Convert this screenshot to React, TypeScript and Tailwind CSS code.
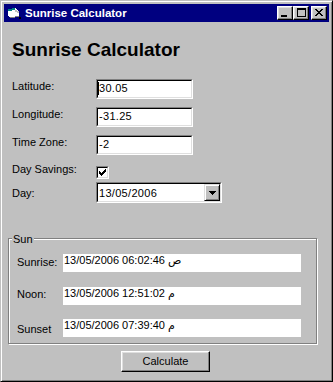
import React from 'react';

// Win95 style building blocks
function CaptionButton({ children, className = '' }: { children: React.ReactNode; className?: string }) {
  return (
    <div className={`w-[16px] h-[14px] bg-[#c0c0c0] border border-t-white border-l-white border-r-black border-b-black shadow-[inset_-1px_-1px_0_#808080,inset_1px_1px_0_#dfdfdf] ${className}`}>
      {children}
    </div>
  );
}

function Sunken({ className = '', children }: { className?: string; children?: React.ReactNode }) {
  return (
    <div className={`border border-t-[#808080] border-l-[#808080] border-r-white border-b-white ${className}`}>
      <div className="h-full w-full border border-t-black border-l-black border-r-[#dfdfdf] border-b-[#dfdfdf] bg-white relative">
        {children}
      </div>
    </div>
  );
}

function TextField({ value, caret }: { value: string; caret?: boolean }) {
  return (
    <Sunken className="w-[97px] h-[20px]">
      <div className="pl-[1px] pt-[1px] whitespace-nowrap tracking-[0.3px]">{value}</div>
      {caret && <span className="absolute left-0 top-[1px] w-[1px] h-[13px] bg-black" />}
    </Sunken>
  );
}

const CHECK = ['......x', '.....xx', 'x...xxx', 'xx.xxx.', 'xxxxx..', '.xxx...', '..x....'];
const CLOSE = ['xx....xx', '.xx..xx.', '..xxxx..', '...xx...', '..xxxx..', '.xx..xx.', 'xx....xx'];

function Pixels({ rows, x, y }: { rows: string[]; x: number; y: number }) {
  return (
    <>
      {rows.map((r, j) =>
        r.split('').map((c, i) => (c === 'x' ? <rect key={`${i}-${j}`} x={x + i} y={y + j} width={1} height={1} fill="#000" /> : null))
      )}
    </>
  );
}

function TimeRow({ label, value, padTop, className }: { label: string; value: string; padTop: string; className: string }) {
  return (
    <div className={`flex ${className}`}>
      <div className={`w-[46px] ${padTop}`}>{label}</div>
      <div className="w-[238px] h-[18px] bg-white pl-[1px] whitespace-nowrap tracking-[0.3px]">{value}</div>
    </div>
  );
}

export default function App() {
  return (
    <div className="w-[333px] h-[382px] bg-[#c0c0c0] border border-t-[#c0c0c0] border-l-[#c0c0c0] border-r-black border-b-black shadow-[inset_1px_1px_0_#fff,inset_-1px_-1px_0_#808080] p-[3px] flex flex-col text-[11px] leading-[13px] text-black font-['Liberation_Sans','DejaVu_Sans',sans-serif]">
      {/* Title bar */}
      <div className="h-[18px] bg-[#000080] flex items-center px-[2px]">
        <svg width="16" height="16" viewBox="0 0 16 16" shapeRendering="crispEdges">
          <path d="M2 4 L9 3 L13 6 L13 12 L4 13 L2 11 Z" fill="#fff" />
          <path d="M2 4 L9 3 L9 5 L2 6 Z" fill="#008080" />
          <path d="M4 13 L13 12 L13 11 L4 12 Z" fill="#808080" />
          <path d="M9 5 L13 6 L13 8 L9 7 Z" fill="#c0c0c0" />
          <rect x="13" y="12" width="2" height="2" fill="#000" />
        </svg>
        <span className="ml-[3px] text-white font-bold text-[11.5px] leading-[13px]">Sunrise Calculator</span>
        <div className="ml-auto flex">
          <CaptionButton>
            <svg width="14" height="12" shapeRendering="crispEdges"><rect x="3" y="8" width="6" height="2" fill="#000" /></svg>
          </CaptionButton>
          <CaptionButton>
            <svg width="14" height="12" shapeRendering="crispEdges">
              <rect x="3.5" y="1.5" width="8" height="8" fill="none" stroke="#000" strokeWidth="1" />
              <rect x="3" y="2" width="9" height="1" fill="#000" />
            </svg>
          </CaptionButton>
          <CaptionButton className="ml-[2px]">
            <svg width="14" height="12" shapeRendering="crispEdges"><Pixels rows={CLOSE} x={3} y={2} /></svg>
          </CaptionButton>
        </div>
      </div>

      {/* Client area */}
      <div className="flex flex-col px-[4px]">
        <h1 className="mt-[18px] pl-[4px] text-[19px] leading-[19px] font-bold">Sunrise Calculator</h1>

        <div className="flex flex-col pl-[4px]">
          <div className="mt-[20px] flex h-[20px]">
            <div className="w-[84px] pt-[1px]">Latitude:</div>
            <TextField value="30.05" caret />
          </div>
          <div className="mt-[8px] flex h-[20px]">
            <div className="w-[84px] pt-[1px]">Longitude:</div>
            <TextField value="-31.25" />
          </div>
          <div className="mt-[8px] flex h-[20px]">
            <div className="w-[84px] pt-[1px]">Time Zone:</div>
            <TextField value="-2" />
          </div>
          <div className="mt-[8px] flex h-[16px]">
            <div className="w-[84px]">Day Savings:</div>
            <Sunken className="mt-[3px] w-[13px] h-[13px]">
              <svg width="9" height="9" shapeRendering="crispEdges"><Pixels rows={CHECK} x={1} y={1} /></svg>
            </Sunken>
          </div>
          <div className="mt-[3px] flex h-[21px]">
            <div className="w-[84px] pt-[5px]">Day:</div>
            <Sunken className="w-[126px] h-[21px]">
              <div className="flex h-full">
                <div className="flex-1 pl-[1px] pt-[3px] tracking-[0.3px]">13/05/2006</div>
                <div className="w-[16px] h-[17px] bg-[#c0c0c0] border border-t-[#dfdfdf] border-l-[#dfdfdf] border-r-black border-b-black shadow-[inset_1px_1px_0_#fff,inset_-1px_-1px_0_#808080] flex items-center justify-center">
                  <svg width="7" height="4" shapeRendering="crispEdges">
                    <rect x="0" y="0" width="7" height="1" fill="#000" />
                    <rect x="1" y="1" width="5" height="1" fill="#000" />
                    <rect x="2" y="2" width="3" height="1" fill="#000" />
                    <rect x="3" y="3" width="1" height="1" fill="#000" />
                  </svg>
                </div>
              </div>
            </Sunken>
          </div>
        </div>

        {/* Sun group */}
        <div className="mt-[35px] w-[309px] h-[106px] relative border border-[#808080] shadow-[inset_1px_1px_0_#fff,1px_1px_0_#fff]">
          <span className="absolute left-[3px] -top-[6px] px-[1px] bg-[#c0c0c0]">Sun</span>
          <div className="flex flex-col pl-[8px]">
            <TimeRow className="mt-[15px]" padTop="pt-[2px]" label="Sunrise:" value="13/05/2006 06:02:46 ص" />
            <TimeRow className="mt-[15px]" padTop="pt-[1px]" label="Noon:" value="13/05/2006 12:51:02 م" />
            <TimeRow className="mt-[14px]" padTop="pt-[4px]" label="Sunset" value="13/05/2006 07:39:40 م" />
          </div>
        </div>

        <button className="mt-[7px] ml-[113px] w-[89px] h-[21px] bg-[#c0c0c0] border border-t-white border-l-white border-r-black border-b-black shadow-[inset_-1px_-1px_0_#808080,inset_1px_1px_0_#dfdfdf] text-[11px] leading-[13px]">
          Calculate
        </button>
      </div>
    </div>
  );
}
